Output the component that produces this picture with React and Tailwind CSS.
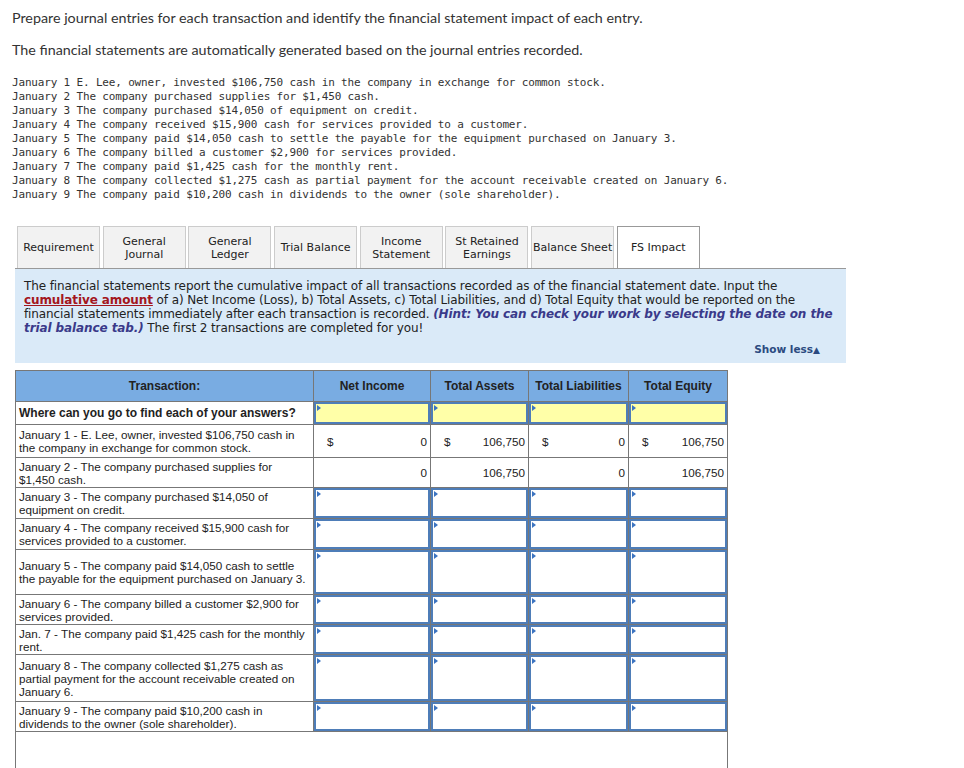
import React from 'react';

const transactions = [
  'January 1 E. Lee, owner, invested $106,750 cash in the company in exchange for common stock.',
  'January 2 The company purchased supplies for $1,450 cash.',
  'January 3 The company purchased $14,050 of equipment on credit.',
  'January 4 The company received $15,900 cash for services provided to a customer.',
  'January 5 The company paid $14,050 cash to settle the payable for the equipment purchased on January 3.',
  'January 6 The company billed a customer $2,900 for services provided.',
  'January 7 The company paid $1,425 cash for the monthly rent.',
  'January 8 The company collected $1,275 cash as partial payment for the account receivable created on January 6.',
  'January 9 The company paid $10,200 cash in dividends to the owner (sole shareholder).',
];

const tabs = [
  ['Requirement'],
  ['General', 'Journal'],
  ['General', 'Ledger'],
  ['Trial Balance'],
  ['Income', 'Statement'],
  ['St Retained', 'Earnings'],
  ['Balance Sheet'],
  ['FS Impact'],
];

const rows = [
  { text: 'January 3 - The company purchased $14,050 of equipment on credit.', tr: 'h-[31px]', box: 'h-[30px]' },
  { text: 'January 4 - The company received $15,900 cash for services provided to a customer.', tr: 'h-[31px]', box: 'h-[30px]' },
  { text: 'January 5 - The company paid $14,050 cash to settle the payable for the equipment purchased on January 3.', tr: 'h-[45px]', box: 'h-[44px]' },
  { text: 'January 6 - The company billed a customer $2,900 for services provided.', tr: 'h-[30px]', box: 'h-[29px]' },
  { text: 'Jan. 7 - The company paid $1,425 cash for the monthly rent.', tr: 'h-[30px]', box: 'h-[29px]' },
  { text: 'January 8 - The company collected $1,275 cash as partial payment for the account receivable created on January 6.', tr: 'h-[47px]', box: 'h-[46px]' },
  { text: 'January 9 - The company paid $10,200 cash in dividends to the owner (sole shareholder).', tr: 'h-[30px]', box: 'h-[29px]' },
];

const Marker = () => (
  <span className="absolute left-[1px] top-[1px] w-0 h-0 border-t-[3px] border-b-[3px] border-l-[4px] border-t-transparent border-b-transparent border-l-[#3b73c0]" />
);

const InputCell = ({ yellow, box }) => (
  <td className="border border-[#777] p-0">
    <div className={`relative ${box} border-2 border-[#4e7db8] ${yellow ? 'bg-[#ffffa8]' : 'bg-white'}`}>
      <Marker />
    </div>
  </td>
);

const ValueCell = ({ dollar, value }) => (
  <td className="border border-[#777] px-[3px] align-middle">
    <div className="flex justify-between pl-[10px]">
      <span>{dollar ? '$' : ''}</span>
      <span>{value}</span>
    </div>
  </td>
);

export default function App() {
  return (
    <div className="w-[964px] min-h-[768px] bg-white pl-[12px] pt-[9px]">
      <p className="font-['Lato',sans-serif] text-[14.3px] leading-[17px] text-[#333]">
        Prepare journal entries for each transaction and identify the financial statement impact of each entry.
      </p>
      <p className="mt-[15px] font-['Lato',sans-serif] text-[14.3px] leading-[17px] text-[#333]">
        The financial statements are automatically generated based on the journal entries recorded.
      </p>

      <div className="mt-[18px] font-['DejaVu_Sans_Mono',monospace] text-[11px] leading-[14px] tracking-[-0.17px] text-[#333] whitespace-pre">
        {transactions.map((t) => (
          <div key={t}>{t}</div>
        ))}
      </div>

      {/* tabs */}
      <div className="ml-[5px] mt-[24px] flex gap-[2.7px] font-['DejaVu_Sans',sans-serif] text-[11px] leading-[13px] text-[#222]">
        {tabs.map((lines, i) => {
          const active = i === tabs.length - 1;
          return (
            <div
              key={i}
              className={`w-[83px] h-[42px] flex flex-col items-center justify-center text-center border border-b-0 ${
                active ? 'bg-white border-[#999]' : 'bg-[#f2f2f2] border-[#ccc]'
              }`}
            >
              {lines.map((l) => (
                <span key={l}>{l}</span>
              ))}
            </div>
          );
        })}
      </div>

      {/* instructions panel */}
      <div className="ml-[3px] w-[831px] h-[95px] bg-[#daeaf8] border-t border-[#999] pl-[9px] pr-[12px] pt-[10px] font-['DejaVu_Sans',sans-serif] text-[12px] leading-[14px] text-[#222] relative">
        <p className="tracking-[-0.1px]">
          The financial statements report the cumulative impact of all transactions recorded as of the financial statement date. Input the{' '}
          <span className="font-bold text-[#a3161d] underline">cumulative amount</span> of a) Net Income (Loss), b) Total Assets, c) Total Liabilities, and d) Total Equity that would be reported on the financial statements immediately after each transaction is recorded.{' '}
          <span className="font-bold italic text-[#3a3a8a]">(Hint: You can check your work by selecting the date on the trial balance tab.)</span> The first 2 transactions are completed for you!
        </p>
        <div className="absolute right-[26px] bottom-[6px] font-bold text-[10.5px] leading-[13px] text-[#2b4a80]">
          Show less<span className="text-[9px]">▲</span>
        </div>
      </div>

      {/* FS impact table */}
      <table className="ml-[3px] mt-[7px] border-collapse table-fixed w-[712px] font-['Liberation_Sans',Arial,sans-serif] text-[11.7px] leading-[13px] text-[#222]">
        <colgroup>
          <col className="w-[298px]" />
          <col className="w-[117px]" />
          <col className="w-[98px]" />
          <col className="w-[100px]" />
          <col className="w-[99px]" />
        </colgroup>
        <thead>
          <tr className="h-[31px] bg-[#79ace2]">
            {['Transaction:', 'Net Income', 'Total Assets', 'Total Liabilities', 'Total Equity'].map((h) => (
              <th key={h} className="border border-[#777] font-bold text-[12px] text-center align-middle">
                {h}
              </th>
            ))}
          </tr>
        </thead>
        <tbody>
          <tr className="h-[23px]">
            <td className="border border-[#777] px-[3px] font-bold text-[12px]">Where can you go to find each of your answers?</td>
            <InputCell yellow box="h-[22px]" />
            <InputCell yellow box="h-[22px]" />
            <InputCell yellow box="h-[22px]" />
            <InputCell yellow box="h-[22px]" />
          </tr>
          <tr className="h-[33px]">
            <td className="border border-[#777] px-[3px]">January 1 - E. Lee, owner, invested $106,750 cash in the company in exchange for common stock.</td>
            <ValueCell dollar value="0" />
            <ValueCell dollar value="106,750" />
            <ValueCell dollar value="0" />
            <ValueCell dollar value="106,750" />
          </tr>
          <tr className="h-[30px]">
            <td className="border border-[#777] px-[3px]">January 2 - The company purchased supplies for $1,450 cash.</td>
            <ValueCell value="0" />
            <ValueCell value="106,750" />
            <ValueCell value="0" />
            <ValueCell value="106,750" />
          </tr>
          {rows.map((r) => (
            <tr key={r.text} className={r.tr}>
              <td className="border border-[#777] px-[3px]">{r.text}</td>
              <InputCell box={r.box} />
              <InputCell box={r.box} />
              <InputCell box={r.box} />
              <InputCell box={r.box} />
            </tr>
          ))}
          <tr className="h-[40px]">
            <td colSpan={5} className="border-x border-[#777]" />
          </tr>
        </tbody>
      </table>
    </div>
  );
}
